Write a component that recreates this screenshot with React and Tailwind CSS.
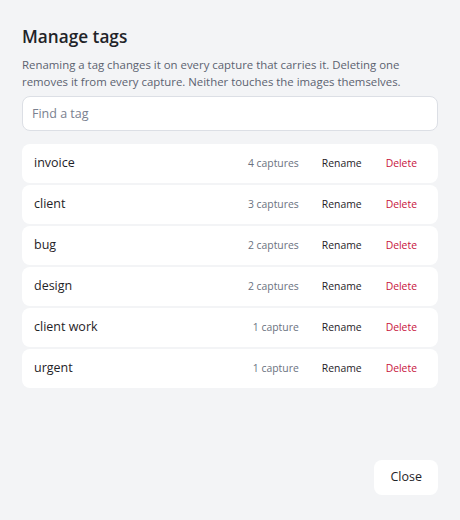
import React, { useState } from 'react';

const tags = [
	{ name: 'invoice', count: 4 },
	{ name: 'client', count: 3 },
	{ name: 'bug', count: 2 },
	{ name: 'design', count: 2 },
	{ name: 'client work', count: 1 },
	{ name: 'urgent', count: 1 },
];

const App = () => {
	const [query, setQuery] = useState('');

	const shown = tags.filter((t) => t.name.includes(query.trim().toLowerCase()));

	return (
		<div
			className="w-[460px] h-[520px] bg-[#f3f4f6] text-[#1f2328] flex flex-col px-[22px] pt-[26px] pb-[25px]"
			style={{ fontFamily: '"Open Sans", "Noto Sans", sans-serif' }}
		>
			<h1 className="text-[17.2px] font-semibold leading-[22px]">Manage tags</h1>
			<p className="mt-[8px] text-[11.4px] leading-[17px] text-[#5b6270]">
				Renaming a tag changes it on every capture that carries it. Deleting one
				removes it from every capture. Neither touches the images themselves.
			</p>

			<input
				value={query}
				onChange={(e) => setQuery(e.target.value)}
				placeholder="Find a tag"
				className="mt-[6px] h-[35px] w-full rounded-[8px] border border-[#dcdfe5] bg-white px-[9px] text-[12.5px] placeholder:text-[#7a8190] outline-none"
			/>

			{/* Tag list */}
			<ul className="mt-[13px] flex flex-col gap-[2px]">
				{shown.map((tag) => (
					<li
						key={tag.name}
						className="h-[39px] flex items-center justify-between rounded-[8px] bg-white pl-[12px] pr-[11px]"
					>
						<span className="text-[12.5px]">{tag.name}</span>
						<div className="flex items-center text-[10.4px]">
							<span className="text-[#6b7280] mr-[14px]">
								{tag.count} {tag.count === 1 ? 'capture' : 'captures'}
							</span>
							<button className="px-[9px] py-1 text-[#1f2328]">Rename</button>
							<button className="ml-[5px] px-[10px] py-1 text-[#c8143c]">Delete</button>
						</div>
					</li>
				))}
			</ul>

			<div className="mt-auto flex justify-end">
				<button className="h-[35px] rounded-[8px] bg-white px-[16px] text-[12.5px]">Close</button>
			</div>
		</div>
	);
};

export default App;
